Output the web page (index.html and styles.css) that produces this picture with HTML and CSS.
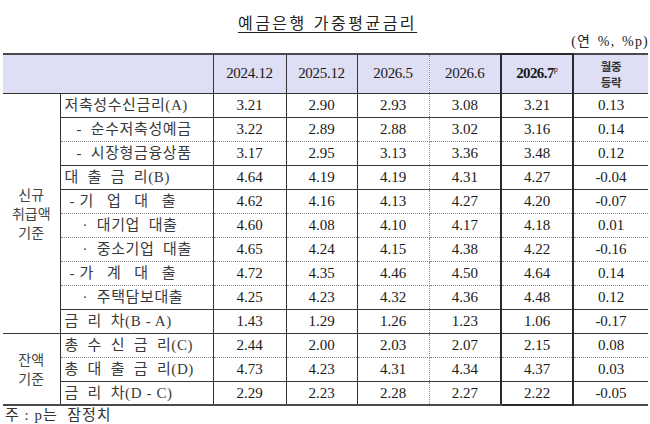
FILE: index.html
```html
<!DOCTYPE html>
<html lang="ko">
<head>
<meta charset="utf-8">
<link rel="stylesheet" href="styles.css">
</head>
<body>
<div class="page">
  <div class="title">예금은행 가중평균금리</div>
  <div class="unit">(연 %, %p)</div>
  <table class="rates">
    <colgroup>
      <col class="w1"><col class="w2"><col class="w3"><col class="w4"><col class="w5"><col class="w6"><col class="w7"><col class="w8">
    </colgroup>
    <thead>
      <tr class="head">
        <th colspan="2" class="c2"></th>
        <th class="c3">2024.12</th>
        <th class="c4">2025.12</th>
        <th class="c5">2026.5</th>
        <th class="c6">2026.6</th>
        <th class="c7 bold">2026.7<sup>p</sup></th>
        <th class="c8 kr"><span class="ln">월중</span><span class="ln">등락</span></th>
      </tr>
    </thead>
    <tbody>
      <tr class="sb">
        <td rowspan="10" class="c1 grp">신규<br>취급액<br>기준</td>
        <td class="c2 lbl">저축성수신금리(A)</td>
        <td class="c3">3.21</td><td class="c4">2.90</td><td class="c5">2.93</td><td class="c6">3.08</td><td class="c7">3.21</td><td class="c8">0.13</td>
      </tr>
      <tr class="db">
        <td class="c2 lbl i1">-&nbsp;&nbsp;순수저축성예금</td>
        <td class="c3">3.22</td><td class="c4">2.89</td><td class="c5">2.88</td><td class="c6">3.02</td><td class="c7">3.16</td><td class="c8">0.14</td>
      </tr>
      <tr class="sb">
        <td class="c2 lbl i1">-&nbsp;&nbsp;시장형금융상품</td>
        <td class="c3">3.17</td><td class="c4">2.95</td><td class="c5">3.13</td><td class="c6">3.36</td><td class="c7">3.48</td><td class="c8">0.12</td>
      </tr>
      <tr class="sb">
        <td class="c2 lbl">대&nbsp; 출&nbsp; 금&nbsp; 리(B)</td>
        <td class="c3">4.64</td><td class="c4">4.19</td><td class="c5">4.19</td><td class="c6">4.31</td><td class="c7">4.27</td><td class="c8">-0.04</td>
      </tr>
      <tr class="db">
        <td class="c2 lbl i2">-&nbsp;기&nbsp;&nbsp; 업&nbsp;&nbsp; 대&nbsp;&nbsp; 출</td>
        <td class="c3">4.62</td><td class="c4">4.16</td><td class="c5">4.13</td><td class="c6">4.27</td><td class="c7">4.20</td><td class="c8">-0.07</td>
      </tr>
      <tr class="db">
        <td class="c2 lbl i3">·&nbsp;&nbsp;대기업&nbsp; 대출</td>
        <td class="c3">4.60</td><td class="c4">4.08</td><td class="c5">4.10</td><td class="c6">4.17</td><td class="c7">4.18</td><td class="c8">0.01</td>
      </tr>
      <tr class="db">
        <td class="c2 lbl i3">·&nbsp;&nbsp;중소기업&nbsp; 대출</td>
        <td class="c3">4.65</td><td class="c4">4.24</td><td class="c5">4.15</td><td class="c6">4.38</td><td class="c7">4.22</td><td class="c8">-0.16</td>
      </tr>
      <tr class="db">
        <td class="c2 lbl i2">-&nbsp;가&nbsp;&nbsp; 계&nbsp;&nbsp; 대&nbsp;&nbsp; 출</td>
        <td class="c3">4.72</td><td class="c4">4.35</td><td class="c5">4.46</td><td class="c6">4.50</td><td class="c7">4.64</td><td class="c8">0.14</td>
      </tr>
      <tr class="sb">
        <td class="c2 lbl i3">·&nbsp;&nbsp;주택담보대출</td>
        <td class="c3">4.25</td><td class="c4">4.23</td><td class="c5">4.32</td><td class="c6">4.36</td><td class="c7">4.48</td><td class="c8">0.12</td>
      </tr>
      <tr class="sb">
        <td class="c2 lbl">금&nbsp; 리&nbsp; 차(B - A)</td>
        <td class="c3">1.43</td><td class="c4">1.29</td><td class="c5">1.26</td><td class="c6">1.23</td><td class="c7">1.06</td><td class="c8">-0.17</td>
      </tr>
      <tr class="db">
        <td rowspan="3" class="c1 grp">잔액<br>기준</td>
        <td class="c2 lbl">총&nbsp; 수&nbsp; 신&nbsp; 금&nbsp; 리(C)</td>
        <td class="c3">2.44</td><td class="c4">2.00</td><td class="c5">2.03</td><td class="c6">2.07</td><td class="c7">2.15</td><td class="c8">0.08</td>
      </tr>
      <tr class="sb">
        <td class="c2 lbl">총&nbsp; 대&nbsp; 출&nbsp; 금&nbsp; 리(D)</td>
        <td class="c3">4.73</td><td class="c4">4.23</td><td class="c5">4.31</td><td class="c6">4.34</td><td class="c7">4.37</td><td class="c8">0.03</td>
      </tr>
      <tr class="last">
        <td class="c2 lbl">금&nbsp; 리&nbsp; 차(D - C)</td>
        <td class="c3">2.29</td><td class="c4">2.23</td><td class="c5">2.28</td><td class="c6">2.27</td><td class="c7">2.22</td><td class="c8">-0.05</td>
      </tr>
    </tbody>
  </table>
  <div class="note">주 : p는&nbsp; 잠정치</div>
</div>
</body>
</html>
```

FILE: styles.css
```css
html, body {
  margin: 0;
  padding: 0;
  background: #ffffff;
}
body {
  font-family: "Liberation Serif", "Noto Sans CJK KR", serif;
  color: #1a1a1a;
  width: 650px;
  height: 424px;
  overflow: hidden;
}
.page {
  padding: 12px 0 0 3px;
}
.title {
  font-family: "Noto Sans CJK KR", sans-serif;
  font-size: 16px;
  line-height: 20px;
  letter-spacing: 2.5px;
  text-align: center;
  text-decoration: underline;
  text-underline-offset: 3px;
  color: #222;
  padding-left: 2px;
}
.unit {
  font-size: 14px;
  line-height: 18px;
  letter-spacing: 1.2px;
  word-spacing: 2px;
  text-align: right;
  margin-top: 1px;
  padding-right: 1px;
  color: #222;
}
.rates {
  border-collapse: collapse;
  table-layout: fixed;
  width: 645px;
  margin-top: 2px;
  font-size: 15px;
  border-top: 2px solid #4a4a4a;
  border-bottom: 2px solid #4a4a4a;
}
.w1 { width: 57px; }
.w2 { width: 153px; }
.w3 { width: 73px; }
.w4 { width: 71px; }
.w5 { width: 72px; }
.w6 { width: 72px; }
.w7 { width: 72px; }
.w8 { width: 75px; }

.rates th, .rates td {
  padding: 0;
  text-align: center;
  vertical-align: middle;
  white-space: nowrap;
  overflow: hidden;
}
.head {
  height: 39px;
}
.head th {
  background: #dedff4;
  font-weight: normal;
  font-size: 15px;
  letter-spacing: -0.3px;
  border-bottom: 1px solid #333;
}
.head th.bold {
  font-weight: bold;
  letter-spacing: -0.6px;
}
.head sup {
  font-size: 8px;
  vertical-align: 6px;
  font-weight: normal;
  letter-spacing: 0;
}
.head th.kr {
  font-family: "Noto Sans CJK KR", sans-serif;
  font-size: 11.5px;
  line-height: 16px;
  font-weight: bold;
  color: #333;
}
.head th.kr .ln {
  display: block;
  height: 16px;
  line-height: 16px;
}
tbody tr {
  height: 24px;
}
tbody td {
  line-height: 20px;
}
.sb td { border-bottom: 1px solid #3a3a3a; }
.db td { border-bottom: 1px dotted #8a8a8a; }
.last td { border-bottom: 2px solid #4a4a4a; }

.c1 { border-right: 1px solid #333; }
.c2 { border-right: 1px solid #333; }
.c3 { border-right: 1px solid #333; }
.c4 { border-right: 1px solid #333; }
.c5 { border-right: 1px dotted #8a8a8a; }
.c7 {
  border-left: 2px solid #2a2a2a;
  border-right: 2px solid #2a2a2a;
}
.head th.c7 { border-top: 2px solid #2a2a2a; }
.last td.c7 { border-bottom: 2px solid #2a2a2a; }

td.grp {
  font-family: "Noto Sans CJK KR", sans-serif;
  font-size: 14px;
  line-height: 19px;
  color: #444;
  border-bottom: 1px solid #3a3a3a;
}
.last td.grp, tr.db td.grp { border-bottom-color: #3a3a3a; }
td.lbl {
  text-align: left;
  padding-left: 4px;
  font-size: 15px;
  letter-spacing: 0.6px;
  color: #3a3a3a;
}
td.lbl.i1 { padding-left: 16px; }
td.lbl.i2 { padding-left: 9px; }
td.lbl.i3 { padding-left: 22px; }

.note {
  font-size: 15px;
  line-height: 18px;
  letter-spacing: 1px;
  padding-left: 2px;
  color: #333;
}
```
